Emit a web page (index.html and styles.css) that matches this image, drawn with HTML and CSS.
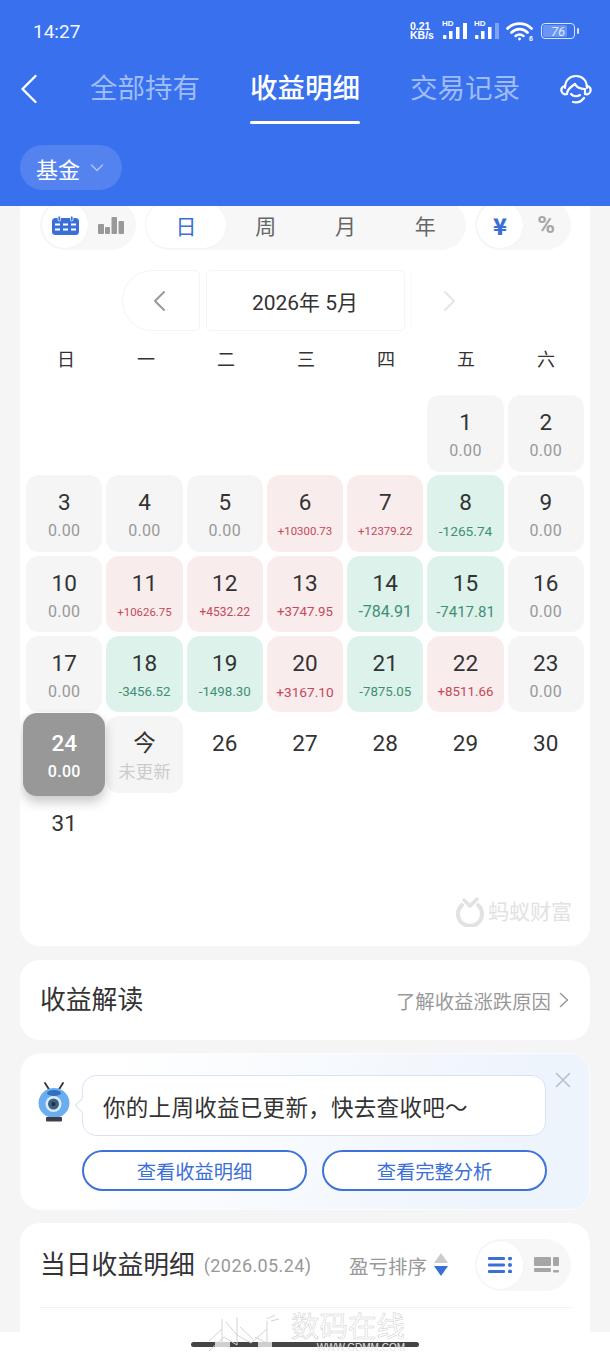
FILE: index.html
```html
<!DOCTYPE html>
<html lang="zh-CN">
<head>
<meta charset="utf-8">
<title>收益明细</title>
<link rel="stylesheet" href="styles.css">
</head>
<body>
<div class="page">
  <header class="header">
    <div class="status">
      <span class="time">14:27</span>
      <div class="status-icons">
        <span class="speed">0.21<br>KB/s</span>
        <span class="signal"><span class="hd">HD</span>
          <svg width="28" height="18" viewBox="0 0 28 18"><rect x="2" y="13" width="3.500" height="4" rx="1" fill="#fff"/><rect x="8" y="9" width="3.500" height="8" fill="#fff"/><rect x="15" y="5" width="3.500" height="12" fill="#fff"/><rect x="22" y="1" width="4" height="16" fill="#fff"/></svg></span>
        <span class="signal"><span class="hd">HD</span>
          <svg width="28" height="18" viewBox="0 0 28 18"><rect x="2" y="13" width="3.500" height="4" rx="1" fill="#fff"/><rect x="8" y="9" width="3.500" height="8" fill="#fff"/><rect x="15" y="5" width="3.500" height="12" fill="#fff"/><rect x="22" y="1" width="4" height="16" fill="#7ea3f4"/></svg></span>
        <svg class="wifi" width="29" height="20" viewBox="0 0 29 20" fill="none" stroke="#fff" stroke-width="2.800" stroke-linecap="round"><path d="M1.500 7.500C8 1 19 1 25.500 7.500"/><path d="M5.500 11.500C10 7 17 7 21.500 11.500"/><path d="M9.500 15C12 13 15 13 17.500 15" stroke-width="2.400"/><circle cx="13.500" cy="18" r="1.400" fill="#fff" stroke="none"/><text x="23" y="19.500" class="wifi-six">6</text></svg>
        <span class="battery"><span class="battery-fill"></span><span class="battery-num">76</span></span><span class="battery-nub"></span>
      </div>
    </div>
    <nav class="tabs">
      <svg class="back" width="18" height="30" viewBox="0 0 18 30" fill="none" stroke="#fff" stroke-width="2.400" stroke-linecap="round" stroke-linejoin="round"><path d="M15.500 2 2.500 15l13 13"/></svg>
      <div class="tab">全部持有</div>
      <div class="tab tab-active">收益明细</div>
      <div class="tab">交易记录</div>
      <svg class="headset" width="32" height="30" viewBox="0 0 32 30" fill="none" stroke="#fff" stroke-width="2.200" stroke-linecap="round" stroke-linejoin="round"><path d="M5 14C5 6 10 2 16 2s11 4 11 12"/><path d="M5 12c-3 .5-4 3-3.500 5S4 21 7 20"/><path d="M27 12c3 .5 4 3 3.500 5S28 21 25 20"/><path d="M7 20c0-5 4-7 8-10 2 4 6 5 10 5v5"/><path d="M11 20c2 2.500 6 3 9 1"/><path d="M13 28c4 1 8 0 11-4"/></svg>
    </nav>
    <div class="filter">基金<svg width="14" height="8" viewBox="0 0 14 8" fill="none" stroke="#a9c3f8" stroke-width="1.600" stroke-linecap="round" stroke-linejoin="round"><path d="m1.500 1 5.500 5.500L12.500 1"/></svg></div>
  </header>

  <main class="main">
    <section class="card calendar">
      <div class="toggles">
        <div class="seg seg-small">
          <span class="seg-item seg-on">
            <svg width="27" height="19" viewBox="0 0 27 19"><rect y="2" width="27" height="17" rx="3.500" fill="#3a6fd8"/><rect x="6" width="2.500" height="5" rx="1.200" fill="#3a6fd8" stroke="#fff" stroke-width=".8"/><rect x="18.500" width="2.500" height="5" rx="1.200" fill="#3a6fd8" stroke="#fff" stroke-width=".8"/><path d="M3 8.500h5M11 8.500h5M19 8.500h5M3 13.500h5M11 13.500h5M19 13.500h5" stroke="#fff" stroke-width="2.200"/></svg>
          </span>
          <span class="seg-item">
            <svg width="26" height="17" viewBox="0 0 26 17" fill="#999"><rect y="7" width="6" height="10" rx="1"/><rect x="7" y="10" width="5" height="7" rx="1"/><rect x="13.500" width="5.500" height="17" rx="1"/><rect x="20.500" y="4" width="5.500" height="13" rx="1"/></svg>
          </span>
        </div>
        <div class="seg seg-wide">
          <span class="seg-item seg-on seg-text-on">日</span>
          <span class="seg-item seg-text">周</span>
          <span class="seg-item seg-text">月</span>
          <span class="seg-item seg-text">年</span>
        </div>
        <div class="seg seg-small">
          <span class="seg-item seg-on unit-on">¥</span>
          <span class="seg-item unit">%</span>
        </div>
      </div>

      <div class="month">
        <div class="month-btn month-prev">
          <svg width="14" height="22" viewBox="0 0 14 22" fill="none" stroke="#999" stroke-width="2" stroke-linecap="round" stroke-linejoin="round"><path d="M12 2 3 11l9 9"/></svg>
        </div>
        <div class="month-label">2026年 5月</div>
        <div class="month-btn month-next">
          <svg width="14" height="22" viewBox="0 0 14 22" fill="none" stroke="#e6e6e6" stroke-width="2.200" stroke-linecap="round" stroke-linejoin="round"><path d="m2 2 9 9-9 9"/></svg>
        </div>
      </div>

      <div class="weekdays">
        <span>日</span><span>一</span><span>二</span><span>三</span><span>四</span><span>五</span><span>六</span>
      </div>

      <div class="days">
        <div class="day blank"></div><div class="day blank"></div><div class="day blank"></div><div class="day blank"></div><div class="day blank"></div>
        <div class="day zero"><b>1</b><i>0.00</i></div>
        <div class="day zero"><b>2</b><i>0.00</i></div>

        <div class="day zero"><b>3</b><i>0.00</i></div>
        <div class="day zero"><b>4</b><i>0.00</i></div>
        <div class="day zero"><b>5</b><i>0.00</i></div>
        <div class="day up"><b>6</b><i class="f11">+10300.73</i></div>
        <div class="day up"><b>7</b><i class="f11">+12379.22</i></div>
        <div class="day down"><b>8</b><i class="f14">-1265.74</i></div>
        <div class="day zero"><b>9</b><i>0.00</i></div>

        <div class="day zero"><b>10</b><i>0.00</i></div>
        <div class="day up"><b>11</b><i class="f11">+10626.75</i></div>
        <div class="day up"><b>12</b><i class="f12">+4532.22</i></div>
        <div class="day up"><b>13</b><i class="f13">+3747.95</i></div>
        <div class="day down"><b>14</b><i class="f16">-784.91</i></div>
        <div class="day down"><b>15</b><i class="f15">-7417.81</i></div>
        <div class="day zero"><b>16</b><i>0.00</i></div>

        <div class="day zero"><b>17</b><i>0.00</i></div>
        <div class="day down"><b>18</b><i class="f13">-3456.52</i></div>
        <div class="day down"><b>19</b><i class="f13">-1498.30</i></div>
        <div class="day up"><b>20</b><i class="f14">+3167.10</i></div>
        <div class="day down"><b>21</b><i class="f13">-7875.05</i></div>
        <div class="day up"><b>22</b><i class="f13">+8511.66</i></div>
        <div class="day zero"><b>23</b><i>0.00</i></div>

        <div class="day selected"><b>24</b><i>0.00</i></div>
        <div class="day today"><b>今</b><i>未更新</i></div>
        <div class="day"><b>26</b></div>
        <div class="day"><b>27</b></div>
        <div class="day"><b>28</b></div>
        <div class="day"><b>29</b></div>
        <div class="day"><b>30</b></div>

        <div class="day"><b>31</b></div>
      </div>

      <div class="brand">
        <svg width="30" height="30" viewBox="0 0 30 30" fill="none" stroke="#e2e2e2" stroke-width="4" stroke-linecap="round" stroke-linejoin="round"><path d="M7 8a12 12 0 1 0 16 0"/><path d="M9 3l6 6 7-7" stroke-width="3.500"/></svg>
        <span>蚂蚁财富</span>
      </div>
    </section>

    <section class="card insight">
      <h2 class="card-title">收益解读</h2>
      <div class="insight-link">了解收益涨跌原因
        <svg width="10" height="16" viewBox="0 0 10 16" fill="none" stroke="#999" stroke-width="1.600" stroke-linecap="round" stroke-linejoin="round"><path d="m1.500 1.500 7 6.500-7 6.500"/></svg>
      </div>
    </section>

    <section class="card notice">
      <svg class="close" width="16" height="16" viewBox="0 0 16 16" fill="none" stroke="#b9bfc9" stroke-width="1.600" stroke-linecap="round"><path d="m1.500 1.500 13 13M14.500 1.500l-13 13"/></svg>
      <div class="notice-row">
        <svg class="mascot" width="32" height="40" viewBox="0 0 32 40"><path d="M7 1l5 8M25 1l-5 8" stroke="#333" stroke-width="1.800" stroke-linecap="round"/><ellipse cx="16" cy="21" rx="15.500" ry="15" fill="#6aaef0"/><ellipse cx="16" cy="11" rx="7" ry="3" fill="#2f6fc0"/><circle cx="15.500" cy="22" r="8" fill="#d9ecfc"/><circle cx="15.500" cy="22" r="5.500" fill="#3d5f82"/><circle cx="15.500" cy="22" r="2" fill="#1f2f40"/><rect x="8" y="35" width="16" height="4.500" rx="1" fill="#3a3f49"/></svg>
        <div class="bubble">你的上周收益已更新，快去查收吧～</div>
      </div>
      <div class="notice-actions">
        <div class="pill-btn">查看收益明细</div>
        <div class="pill-btn">查看完整分析</div>
      </div>
    </section>

    <section class="card detail">
      <div class="detail-head">
        <h2 class="card-title">当日收益明细</h2>
        <span class="detail-date">(2026.05.24)</span>
        <span class="sort">盈亏排序</span>
        <svg class="sort-icon" width="14" height="24" viewBox="0 0 14 24"><path d="M7 0l7 10H0z" fill="#ccc"/><path d="M0 13h14L7 23z" fill="#3a6fd8"/></svg>
        <div class="seg seg-small seg-tall">
          <span class="seg-item seg-on">
            <svg width="25" height="16" viewBox="0 0 25 16" fill="#3a6fd8"><rect width="17" height="3" rx="1"/><rect y="6.500" width="17" height="3" rx="1"/><rect y="13" width="17" height="3" rx="1"/><circle cx="22" cy="1.500" r="2"/><circle cx="22" cy="8" r="2"/><circle cx="22" cy="14.500" r="2"/></svg>
          </span>
          <span class="seg-item">
            <svg width="25" height="16" viewBox="0 0 25 16" fill="#a6a6a6"><rect width="17" height="9" rx="1"/><rect x="19" width="6" height="9" rx="1"/><rect y="11" width="17" height="4" rx="1"/><rect x="19" y="13" width="6" height="2.500" rx="1"/></svg>
          </span>
        </div>
      </div>
      <div class="detail-rule"></div>
    </section>
  </main>

  <footer class="homebar"><span class="home-indicator"></span></footer>

  <div class="stamp" aria-hidden="true">
    <svg width="80" height="40" viewBox="0 0 80 40" fill="none" stroke="#d4d4d4" stroke-width="1"><rect x="8" y="29" width="15" height="5" fill="#cfcfcf" stroke="none"/><rect x="51" y="29" width="14" height="5" fill="#cfcfcf" stroke="none"/><path d="M2 38 17 24 30 32 30 4M15 6 15 34M19 9 30 22 44 30 60 16M48 24 60 30 60 8M60 6l8-4M64 8l8-2M2 28 15 16M33 14 46 26"/></svg>
    <div class="stamp-text">
      <span class="stamp-cn">数码在线</span>
      <span class="stamp-url">WWW.GDMM.COM</span>
    </div>
  </div>
</div>
</body>
</html>
```

FILE: styles.css
```css
* { box-sizing: border-box; }

html, body {
  margin: 0;
  padding: 0;
  height: 100%;
}

body {
  font-family: Roboto, "Noto Sans CJK SC", sans-serif;
  color: #333;
  background: #fff;
}

.page {
  position: relative;
  width: 610px;
  height: 1356px;
  display: flex;
  flex-direction: column;
  overflow: hidden;
}

/* header */
.header {
  height: 206px;
  flex: none;
  background: #3870ee;
  color: #fff;
}

.status {
  height: 62px;
  padding: 0 31px 0 33px;
  display: flex;
  align-items: center;
  justify-content: space-between;
}

.time {
  font-size: 19px;
  font-weight: 400;
  color: #f2f6ff;
}

.status-icons {
  display: flex;
  align-items: center;
}

.speed {
  width: 31px;
  font-size: 10.500px;
  line-height: 9.500px;
  font-weight: 700;
  font-family: "Liberation Sans", sans-serif;
}

.signal {
  position: relative;
  width: 32px;
  height: 18px;
  display: block;
}

.hd {
  position: absolute;
  left: 1px;
  top: -3px;
  font-size: 8px;
  font-weight: 700;
  font-family: "Liberation Sans", sans-serif;
}

.signal svg {
  display: block;
}

.wifi {
  margin-left: 1px;
}

.wifi-six {
  font-size: 7px;
  font-weight: 700;
  fill: #fff;
  stroke: none;
  font-family: "Liberation Sans", sans-serif;
}

.battery {
  position: relative;
  width: 34px;
  height: 16px;
  margin-left: 6px;
  border: 1.500px solid #dbe6fd;
  border-radius: 4px;
  overflow: hidden;
  display: flex;
  align-items: center;
  justify-content: center;
}

.battery-fill {
  position: absolute;
  left: 1px;
  top: 1px;
  bottom: 1px;
  width: 24px;
  border-radius: 2px;
  background: #6b95f3;
}

.battery-num {
  position: relative;
  font-size: 13px;
  font-style: italic;
  color: #dfe9fe;
}

.battery-nub {
  width: 2px;
  height: 6px;
  margin-left: 2px;
  background: #dbe6fd;
  border-radius: 1px;
}

.tabs {
  height: 62px;
  padding: 0 19px 0 20px;
  display: flex;
  align-items: flex-start;
}

.back {
  margin: 12px 53px 0 0;
  flex: none;
}

.tab {
  position: relative;
  width: 108px;
  font-size: 27.500px;
  font-weight: 400;
  line-height: 54px;
  white-space: nowrap;
  text-align: center;
  color: #9ebcf7;
  display: flex;
  justify-content: center;
}

.tab + .tab {
  margin-left: 52px;
}

.tab-active {
  color: #fff;
  font-weight: 500;
}

.tab-active::after {
  content: "";
  position: absolute;
  left: -1px;
  right: -1px;
  top: 59px;
  height: 3px;
  border-radius: 2px;
  background: #fff;
}

.headset {
  margin: 12px 0 0 41px;
  flex: none;
}

.filter {
  width: 102px;
  height: 45px;
  margin: 21px 0 0 20px;
  padding-left: 16px;
  border-radius: 23px;
  background: #5483f0;
  display: flex;
  align-items: center;
  gap: 10px;
  font-size: 22px;
}

/* main */
.main {
  flex: 1;
  min-height: 0;
  overflow: hidden;
  background: #f5f5f5;
  display: flex;
  flex-direction: column;
  padding: 0 20px;
}

.card {
  flex: none;
  background: #fff;
  border-radius: 20px;
}

.calendar {
  height: 740px;
  padding: 0 6px;
  border-radius: 0 0 20px 20px;
  overflow: hidden;
}

.toggles {
  margin-top: -6px;
  padding-left: 14px;
  display: flex;
  gap: 9px;
}

.seg {
  height: 50px;
  padding: 2px;
  border-radius: 25px;
  background: #f7f7f7;
  display: flex;
}

.seg-small { width: 96px; }
.seg-wide { width: 321px; padding: 2px 1px; }

.seg-item {
  flex: 1;
  border-radius: 23px;
  display: flex;
  align-items: center;
  justify-content: center;
}

.seg-on {
  background: #fff;
  box-shadow: 0 0 3px rgba(0, 0, 0, .03);
}

.seg-text {
  font-size: 21px;
  color: #666;
}

.seg-text-on {
  font-size: 21px;
  color: #3a6fd8;
}

.unit-on {
  font-family: "Noto Sans CJK SC", sans-serif;
  font-size: 23px;
  font-weight: 900;
  color: #3a6fd8;
}

.unit {
  font-size: 24px;
  font-weight: 700;
  color: #a6a6a6;
}

.month {
  height: 61px;
  margin-top: 20px;
  display: flex;
  justify-content: center;
  gap: 6px;
}

.month-btn {
  width: 78px;
  display: flex;
  align-items: center;
  justify-content: center;
}

.month-prev {
  border: 1px solid #f4f4f4;
  border-radius: 30px 5px 5px 30px;
  padding-right: 4px;
}

.month-next {
  border-left: 1px solid #fafafa;
}

.month-label {
  width: 199px;
  border: 1px solid #f4f4f4;
  border-radius: 5px;
  display: flex;
  align-items: center;
  justify-content: center;
  font-size: 21px;
  font-weight: 400;
}

.weekdays {
  height: 30px;
  margin-top: 14px;
  padding-left: 2px;
  display: grid;
  grid-template-columns: repeat(7, 1fr);
  column-gap: 3.800px;
  font-size: 18px;
  line-height: 30px;
  text-align: center;
}

.days {
  margin-top: 20px;
  display: grid;
  grid-template-columns: repeat(7, 1fr);
  grid-auto-rows: 76.500px;
  gap: 3.800px 3.800px;
}

.day {
  border-radius: 13px;
  padding-top: 14px;
  display: flex;
  flex-direction: column;
  align-items: center;
  white-space: nowrap;
}

.day b {
  font-size: 22.500px;
  line-height: 26px;
  font-weight: 400;
  color: #333;
}

.day i {
  margin-top: 6px;
  font-size: 16px;
  line-height: 20px;
  font-style: normal;
  letter-spacing: .3px;
}

.day i.f11 { font-size: 11.400px; letter-spacing: 0; }
.day i.f12 { font-size: 12px; letter-spacing: 0; }
.day i.f13 { font-size: 13.300px; letter-spacing: 0; }
.day i.f14 { font-size: 13.700px; letter-spacing: 0; }
.day i.f15 { font-size: 15px; letter-spacing: 0; }
.day i.f16 { font-size: 16px; letter-spacing: 0; }

.blank { background: transparent; }
.zero { background: #f5f5f5; }
.zero i { color: #999; }
.up { background: #f8ecec; }
.up i { color: #c5485a; }
.down { background: #dcf2ea; }
.down i { color: #3f8f76; }

.today { background: #f5f5f5; }
.today b { font-weight: 400; }
.day.today i { font-size: 17.500px; letter-spacing: 0; color: #ccc; }

.selected {
  margin: -3px;
  padding-top: 17px;
  background: #989898;
  border-radius: 14px;
  box-shadow: 0 6px 12px rgba(0, 0, 0, .22);
  position: relative;
}

.selected b,
.selected i {
  color: #fff;
  font-weight: 500;
}

.brand {
  margin-top: 24px;
  padding-right: 12px;
  display: flex;
  justify-content: flex-end;
  align-items: center;
  gap: 3px;
  font-size: 21px;
  line-height: 30px;
  color: #e2e2e2;
}

/* insight */
.insight {
  height: 80px;
  margin-top: 14px;
  padding: 0 21px 0 20px;
  display: flex;
  align-items: center;
  justify-content: space-between;
}

.card-title {
  margin: 0;
  font-size: 25.800px;
  line-height: 36px;
  font-weight: 400;
  color: #333;
  white-space: nowrap;
}

.insight-link {
  display: flex;
  align-items: center;
  gap: 8px;
  font-size: 19.400px;
  color: #999;
}

/* notice */
.notice {
  position: relative;
  height: 157px;
  margin-top: 13px;
  padding: 21px 0 0 18px;
  border: 1px solid #fbfcfe;
  background: linear-gradient(110deg, #fff 15%, #eef4fc 85%);
}

.close {
  position: absolute;
  right: 18px;
  top: 18px;
}

.notice-row {
  display: flex;
  align-items: flex-start;
  margin-left: -1px;
}

.mascot {
  margin: 7px 12px 0 0;
  flex: none;
}

.bubble {
  position: relative;
  width: 464px;
  height: 61px;
  padding-left: 20px;
  border: 1px solid #dbe3f3;
  border-radius: 14px;
  background: #fff;
  display: flex;
  align-items: center;
  font-size: 22.500px;
  letter-spacing: .3px;
  white-space: nowrap;
}

.bubble::before {
  content: "";
  position: absolute;
  left: -6px;
  top: 24px;
  width: 10px;
  height: 10px;
  background: #fff;
  border-left: 1px solid #dbe3f3;
  border-bottom: 1px solid #dbe3f3;
  transform: rotate(45deg);
}

.notice-actions {
  margin: 14px 0 0 43px;
  display: flex;
  gap: 15px;
}

.pill-btn {
  width: 225px;
  height: 41px;
  border: 2px solid #3f72d9;
  border-radius: 21px;
  background: #fff;
  display: flex;
  align-items: center;
  justify-content: center;
  font-size: 19.300px;
  color: #3a6fd8;
}

/* detail */
.detail {
  flex: 1;
  margin-top: 13px;
  padding: 16px 19px 0 20px;
  border-radius: 20px 20px 0 0;
}

.detail-head {
  height: 52px;
  display: flex;
  align-items: center;
}

.detail-date {
  margin-left: 9px;
  font-size: 18px;
  letter-spacing: .4px;
  color: #999;
  white-space: nowrap;
}

.sort {
  margin-left: auto;
  font-size: 19.500px;
  color: #999;
  white-space: nowrap;
}

.sort-icon {
  margin-left: 7px;
  flex: none;
}

.seg-tall {
  height: 52px;
  margin-left: 27px;
  flex: none;
  border-radius: 26px;
}

.detail-rule {
  height: 1px;
  margin-top: 16px;
  background: #f2f2f2;
}

/* bottom */
.homebar {
  height: 24px;
  flex: none;
  background: #fff;
  display: flex;
  justify-content: center;
  padding-top: 10px;
}

.home-indicator {
  width: 228px;
  height: 5px;
  border-radius: 3px;
  background: #444;
}

.stamp {
  position: absolute;
  left: 207px;
  top: 1313px;
  display: flex;
  gap: 2px;
  pointer-events: none;
}

.stamp-text {
  width: 116px;
  display: flex;
  flex-direction: column;
  align-items: flex-end;
}

.stamp-cn {
  font-size: 28.500px;
  line-height: 30px;
  color: transparent;
  -webkit-text-stroke: .5px #cfcfcf;
  white-space: nowrap;
}

.stamp-url {
  font-size: 10px;
  line-height: 10px;
  color: #e9e9e9;
  white-space: nowrap;
  font-family: "Liberation Sans", sans-serif;
}
```
